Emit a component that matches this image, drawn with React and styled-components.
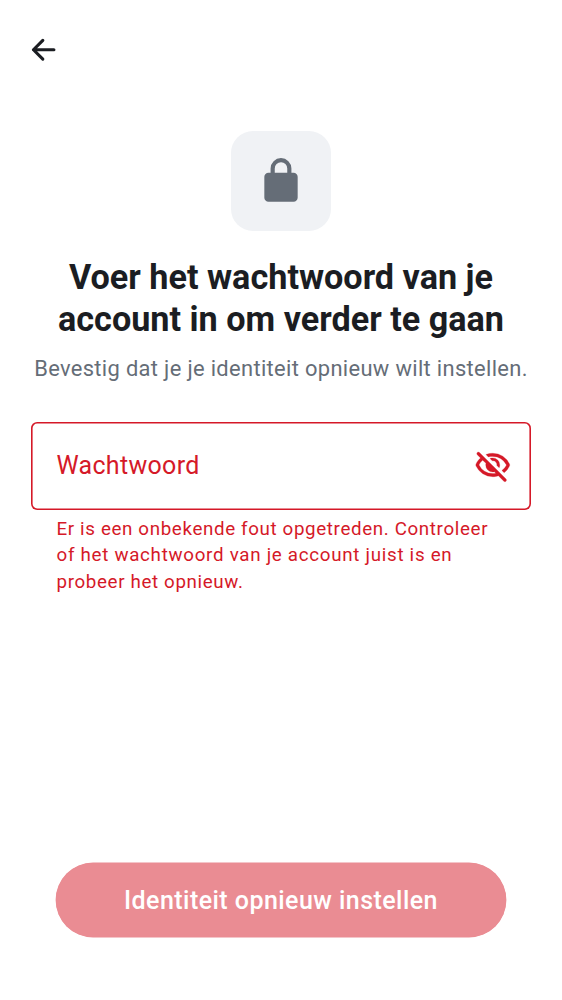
import React from 'react';
import styled, { createGlobalStyle } from 'styled-components';

const GlobalStyle = createGlobalStyle`
  * { box-sizing: border-box; }
  body { margin: 0; background: #fff; }
`;

const Screen = styled.main`
  height: 1000px;
  width: 562px;
  display: flex;
  flex-direction: column;
  background: #fff;
  color: #1b1d22;
  font-family: Roboto, sans-serif;
`;

const TopBar = styled.header`
  height: 100px;
  padding-left: 25px;
  display: flex;
  align-items: center;
`;

const IconButton = styled.button`
  display: flex;
  padding: 0;
  border: 0;
  background: none;
  color: inherit;
`;

const Header = styled.section`
  display: flex;
  flex-direction: column;
  align-items: center;
  padding-top: 31px;
  text-align: center;
`;

const IconTile = styled.div`
  width: 100px;
  height: 100px;
  border-radius: 22px;
  display: flex;
  align-items: center;
  justify-content: center;
  background: #f0f2f5;
  color: #656d77;
`;

const Title = styled.h1`
  margin: 25px 0 0;
  font-size: 34.2px;
  font-weight: 700;
  line-height: 42px;
  white-space: nowrap;
`;

const Subtitle = styled.p`
  margin: 13px 0 0;
  font-size: 21.9px;
  line-height: 31px;
  letter-spacing: 0.34px;
  white-space: nowrap;
  color: #656d77;
`;

const Form = styled.section`
  padding: 38px 31px 0;
  color: #d51928;
`;

const Field = styled.div`
  height: 87.5px;
  padding: 0 19.5px 1px 25.4px;
  display: flex;
  align-items: center;
  justify-content: space-between;
  box-shadow: inset 0 0 0 1.6px #d51928;
  border-radius: 6.2px;
`;

const Label = styled.label`
  font-size: 25px;
  line-height: 37px;
  letter-spacing: 0.32px;
`;

const ErrorText = styled.p`
  margin: 6.2px 0 0 25.5px;
  font-size: 18.75px;
  line-height: 26.6px;
  letter-spacing: 0.64px;
  white-space: nowrap;
`;

const ErrorLine = styled.span`
  display: block;
  letter-spacing: ${({ $spacing }) => $spacing || '0.64px'};
`;

const Footer = styled.footer`
  margin-top: auto;
  padding: 0 56px 63px;
`;

const SubmitButton = styled.button`
  display: block;
  width: 450px;
  height: 74px;
  padding: 0;
  border: 0;
  border-radius: 37px;
  background: #ea8c93;
  box-shadow: 0 0 0 0.4px #ea8c93;
  color: #fff;
  font: 500 25px/37px Roboto, sans-serif;
  letter-spacing: 0.45px;
`;

const BackIcon = () => (
  <svg width="37.5" height="37.5" viewBox="0 0 24 24" fill="none" stroke="currentColor" strokeWidth="2" strokeLinecap="round" strokeLinejoin="round">
    <path d="M18.5 12H5.4M11.4 6L5.4 12l6 6" />
  </svg>
);

const LockIcon = () => (
  <svg width="50" height="50" viewBox="0 0 24 24" fill="currentColor">
    <path d="M6 22q-.824 0-1.412-.587A1.93 1.93 0 0 1 4 20V10q0-.825.588-1.412A1.93 1.93 0 0 1 6 8h1V6q0-2.075 1.463-3.537Q9.926 1 12 1t3.537 1.463T17 6v2h1q.824 0 1.413.588Q20 9.175 20 10v10q0 .824-.587 1.413A1.93 1.93 0 0 1 18 22zM9 8h6V6q0-1.25-.875-2.125A2.9 2.9 0 0 0 12 3q-1.25 0-2.125.875A2.9 2.9 0 0 0 9 6z" />
  </svg>
);

const EyeOffIcon = () => (
  <svg width="37.5" height="37.5" viewBox="0 0 24 24" fill="currentColor" stroke="currentColor" strokeWidth="0.15">
    <path d="M16.1 13.3l-1.45-1.45q.225-1.175-.675-2.2t-2.325-.8L10.2 7.4q.425-.2.863-.3A4.2 4.2 0 0 1 12 7q1.875 0 3.188 1.313Q16.5 9.625 16.5 11.5q0 .5-.1.938t-.3.862z" />
    <path d="M19.3 16.45l-1.45-1.4q.95-.725 1.688-1.588A9 9 0 0 0 20.8 11.5q-1.25-2.525-3.588-4.013Q14.875 6 12 6q-.725 0-1.425.1a10 10 0 0 0-1.375.3L7.65 4.85q1.025-.425 2.1-.637Q10.825 4 12 4q3.575 0 6.425 1.887T22.7 10.8q.075.125.1.313a2 2 0 0 1 0 .762.9.9 0 0 1-.087.313A11.5 11.5 0 0 1 21.3 14.5a11 11 0 0 1-2 1.95z" />
    <path fillRule="evenodd" d="M19.1 21.9l-3.5-3.45q-.875.275-1.762.413Q12.95 19 12 19q-3.575 0-6.425-1.887T1.3 12.2a.8.8 0 0 1-.1-.312 3 3 0 0 1 0-.763.8.8 0 0 1 .1-.3Q1.825 9.7 2.55 8.75A13.3 13.3 0 0 1 4.15 7L2.075 4.9a.93.93 0 0 1-.275-.688q0-.412.3-.712a.95.95 0 0 1 .7-.275q.425 0 .7.275l17 17q.275.275.288.688a.93.93 0 0 1-.288.712.95.95 0 0 1-.7.275.95.95 0 0 1-.7-.275zM5.55 8.4q-.725.65-1.325 1.425A9 9 0 0 0 3.2 11.5a9.6 9.6 0 0 0 3.587 4.013Q9.125 17 12 17q.5 0 .975-.063.475-.061.975-.137l-.9-.95q-.275.075-.525.113A3.5 3.5 0 0 1 12 16q-1.875 0-3.188-1.312Q7.5 13.375 7.5 11.5q0-.275.037-.525.038-.25.113-.525z" />
  </svg>
);

export default function App() {
  return (
    <Screen>
      <GlobalStyle />
      <TopBar>
        <IconButton aria-label="Terug"><BackIcon /></IconButton>
      </TopBar>
      <Header>
        <IconTile><LockIcon /></IconTile>
        <Title>Voer het wachtwoord van je<br />account in om verder te gaan</Title>
        <Subtitle>Bevestig dat je je identiteit opnieuw wilt instellen.</Subtitle>
      </Header>
      <Form>
        <Field>
          <Label>Wachtwoord</Label>
          <IconButton aria-label="Wachtwoord tonen"><EyeOffIcon /></IconButton>
        </Field>
        <ErrorText>
          <ErrorLine>Er is een onbekende fout opgetreden. Controleer</ErrorLine>
          <ErrorLine $spacing="0.71px">of het wachtwoord van je account juist is en</ErrorLine>
          <ErrorLine>probeer het opnieuw.</ErrorLine>
        </ErrorText>
      </Form>
      <Footer><SubmitButton disabled>Identiteit opnieuw instellen</SubmitButton></Footer>
    </Screen>
  );
}
